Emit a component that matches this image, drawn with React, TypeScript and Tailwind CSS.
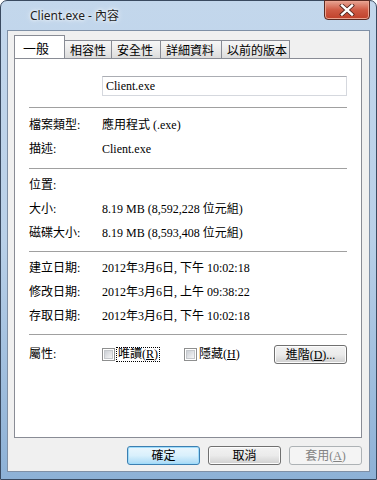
import React from "react";

// Win7 "Client.exe - 內容" file properties dialog, General tab

const tabs = [
  { label: "相容性", w: "w-[47px]" },
  { label: "安全性", w: "w-[49px]" },
  { label: "詳細資料", w: "w-[61px]" },
  { label: "以前的版本", w: "w-[68px]" },
];

function Row({ label, value }: { label: string; value?: string }) {
  return (
    <div className="flex h-[24px] items-center">
      <span className="w-[73px] shrink-0">{label}</span>
      {value && <span>{value}</span>}
    </div>
  );
}

function Sep() {
  return <div className="h-px bg-[#a0a0a0]" />;
}

function Checkbox() {
  return (
    <span className="flex h-[13px] w-[13px] shrink-0 items-center justify-center border border-[#8e8f8f] bg-white">
      <span className="h-[9px] w-[9px] bg-gradient-to-br from-[#cbcfd5] to-[#f6f6f6] border border-[#c5c8cc]" />
    </span>
  );
}

function Btn({
  children,
  primary,
  disabled,
  w = "w-[73px]",
}: {
  children: React.ReactNode;
  primary?: boolean;
  disabled?: boolean;
  w?: string;
}) {
  const base = `${w} h-[19px] flex items-center justify-center rounded-[3px] border text-[12px] leading-none`;
  if (disabled) {
    return <div className={`${base} border-[#adb2b5] bg-[#f4f4f4] text-[#838383]`}>{children}</div>;
  }
  if (primary) {
    return (
      <div className={`${base} border-[#3c7fb1] bg-gradient-to-b from-[#eaf6fd] via-[#d9f0fc] to-[#a7d9f5] shadow-[inset_0_0_0_1px_#9fdcfb]`}>
        {children}
      </div>
    );
  }
  return (
    <div className={`${base} border-[#707070] bg-gradient-to-b from-[#f2f2f2] via-[#ebebeb] to-[#cfcfcf] shadow-[inset_0_0_0_1px_#fcfcfc]`}>
      {children}
    </div>
  );
}

export default function App() {
  return (
    <div className="h-[480px] w-[377px] overflow-hidden bg-white">
      <div className="flex h-full w-full flex-col rounded-t-[7px] border border-[#3a4a60] bg-gradient-to-b from-[#c3d7ec] via-[#b9d0e8] to-[#8db1d6] font-['Liberation_Serif','Noto_Sans_CJK_TC',serif] text-[12px] text-black">
        {/* title bar */}
        <div className="flex h-[29px] shrink-0 items-start">
          <span className="pl-[29px] pt-[6px] font-['Noto_Sans','Noto_Sans_CJK_TC',sans-serif] text-[12px] text-[#1e1e1e] [text-shadow:0_0_6px_#ffffff,0_0_3px_#ffffff]">
            Client.exe - 內容
          </span>
          <div className="ml-auto mr-[6px] mt-[-1px] flex h-[20px] w-[46px] items-center justify-center rounded-b-[4px] border border-[#5b2a22] bg-gradient-to-b from-[#e6a393] via-[#cf5a44] to-[#c0402a] shadow-[inset_0_0_0_1px_#eba491]">
            <svg width="16" height="12" viewBox="0 0 16 12">
              <path d="M3 1.5 L13 10.5 M13 1.5 L3 10.5" stroke="#4a1f18" strokeWidth="4" strokeLinecap="square" />
              <path d="M3 1.5 L13 10.5 M13 1.5 L3 10.5" stroke="#ffffff" strokeWidth="2.4" strokeLinecap="square" />
            </svg>
          </div>
        </div>

        {/* client area */}
        <div className="mx-[6px] mb-[7px] flex flex-1 flex-col border border-[#7f90a6] bg-[#f0f0f0] pl-[6px] pr-[7px] pt-[5px]">
          {/* tabs */}
          <div className="relative z-10 flex h-[22px] items-end">
            <div className="h-[23px] w-[51px] border-x border-t border-[#898c95] bg-white pl-[8px] pt-[2px] font-['Noto_Sans_CJK_TC',sans-serif] text-[13px]">
              一般
            </div>
            {tabs.map((t) => (
              <div
                key={t.label}
                className={`${t.w} h-[18px] border-r border-t border-[#898c95] bg-gradient-to-b from-[#f7f7f7] via-[#ebebeb] to-[#dcdcdc] pl-[5px] pt-[1px] font-['Noto_Sans_CJK_TC',sans-serif] text-[12px] leading-[15px]`}
              >
                {t.label}
              </div>
            ))}
          </div>

          {/* panel */}
          <div className="h-[380px] border border-[#898c95] bg-white px-[14px] pt-[17px]">
            <div className="flex">
              <span className="w-[73px] shrink-0" />
              <div className="flex h-[20px] w-[246px] items-center border border-[#d5d8de] border-t-[#abadb3] pl-[3px]">
                Client.exe
              </div>
            </div>
            <div className="mt-[11px]">
              <Sep />
            </div>
            <div className="mt-[5px]">
              <Row label="檔案類型:" value="應用程式 (.exe)" />
              <Row label="描述:" value="Client.exe" />
            </div>
            <div className="mt-[7px]">
              <Sep />
            </div>
            <div className="mt-[4px]">
              <Row label="位置:" />
              <Row label="大小:" value="8.19 MB (8,592,228 位元組)" />
              <Row label="磁碟大小:" value="8.19 MB (8,593,408 位元組)" />
            </div>
            <div className="mt-[6px]">
              <Sep />
            </div>
            <div className="mt-[4px]">
              <Row label="建立日期:" value="2012年3月6日, 下午 10:02:18" />
              <Row label="修改日期:" value="2012年3月6日, 上午 09:38:22" />
              <Row label="存取日期:" value="2012年3月6日, 下午 10:02:18" />
            </div>
            <div className="mt-[6px]">
              <Sep />
            </div>
            <div className="mt-[10px] flex h-[19px] items-center">
              <span className="w-[73px] shrink-0 self-start">屬性:</span>
              <div className="flex items-center">
                <Checkbox />
                <span className="ml-[1px] border border-dotted border-black px-[1px] leading-[13px]">
                  唯讀(<u>R</u>)
                </span>
              </div>
              <div className="ml-[24px] flex items-center">
                <Checkbox />
                <span className="ml-[2px] leading-[13px]">
                  隱藏(<u>H</u>)
                </span>
              </div>
              <div className="ml-auto">
                <Btn>
                  進階(<u>D</u>)...
                </Btn>
              </div>
            </div>
          </div>

          {/* bottom buttons */}
          <div className="mt-[8px] flex justify-end gap-[8px]">
            <Btn primary>確定</Btn>
            <Btn>取消</Btn>
            <Btn disabled>
              套用(<u>A</u>)
            </Btn>
          </div>
        </div>
      </div>
    </div>
  );
}
